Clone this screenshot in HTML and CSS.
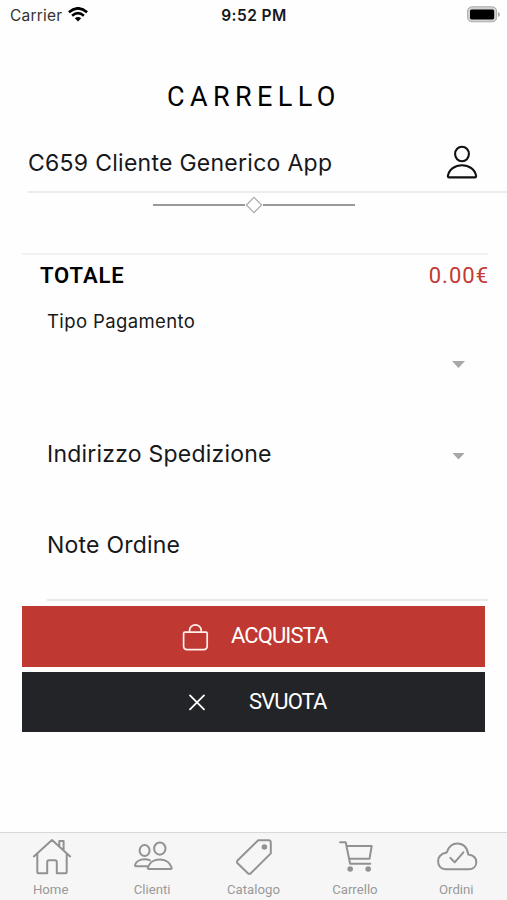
FILE: index.html
```html
<!DOCTYPE html>
<html lang="it">
<head>
<meta charset="utf-8">
<title>Carrello</title>
<link rel="stylesheet" href="styles.css">
</head>
<body>
<div class="screen">
  <header class="status">
    <div class="status-left"><span class="carrier">Carrier</span>
      <svg class="wifi" width="20" height="15" viewBox="0 0 20 15"><g fill="none" stroke="#000" stroke-width="2.6"><path d="M.9 5.2Q10-2.6 19.1 5.2"/><path d="M4.1 8.7Q10 3.5 15.9 8.7"/></g><path d="M6.8 11.3Q10 8.6 13.2 11.3L10 14.6Z"/></svg>
    </div>
    <span class="time">9:52 PM</span>
    <div class="status-right">
      <svg width="34" height="17" viewBox="0 0 34 17"><rect x="1.6" y=".8" width="29" height="15" rx="4.2" fill="#d2d2d2" stroke="#aaa" stroke-width="1"/><rect x="4" y="3.4" width="24.2" height="10" rx="1.6"/><path d="M32 6v5q2-.7 2-2.5T32 6Z" fill="#aaa"/></svg>
    </div>
  </header>
  <main>
    <h1 class="title">CARRELLO</h1>
    <section class="customer">
      <span class="customer-name">C659 Cliente Generico App</span>
      <svg width="32" height="36" viewBox="0 0 32 36" fill="none" stroke="#111" stroke-width="2.1"><ellipse cx="16" cy="10" rx="6.9" ry="7.3"/><path d="M3.2 33.4Q1.7 33.4 1.9 31.9C2.9 25.4 9 21.2 16 21.2S29.1 25.4 30.1 31.9Q30.3 33.4 28.8 33.4Z" stroke-linejoin="round"/></svg>
    </section>
    <div class="ornament"><span class="rule"></span><svg width="18" height="18" viewBox="0 0 18 18" fill="none" stroke="#aaa" stroke-width="1.2"><path d="M9 1.4 16.6 9 9 16.6 1.4 9Z"/></svg><span class="rule"></span></div>
    <section class="summary">
      <div class="total"><span class="total-label">TOTALE</span><span class="price">0.00€</span></div>
      <div class="field payment"><label class="payment-label">Tipo Pagamento</label><span class="caret"></span></div>
      <div class="field address"><label class="address-label">Indirizzo Spedizione</label><span class="caret"></span></div>
      <div class="notes"><label class="notes-label">Note Ordine</label></div>
    </section>
    <div class="actions">
      <button class="button buy"><svg width="28" height="28" viewBox="0 0 28 28" fill="none" stroke="#fff0ee" stroke-width="1.7" stroke-linejoin="round"><path d="M3 9.2H24Q25.2 9.2 25.2 10.4V23Q25.2 26.6 21.6 26.6H5.2Q1.6 26.6 1.6 23V10.4Q1.6 9.2 3 9.2M7.6 9V7.3C7.6 4.3 10.4 1.8 13.4 1.8S19.2 4.3 19.2 7.3V9"/></svg><span class="buy-label">ACQUISTA</span></button>
      <button class="button clear"><svg width="18" height="18" viewBox="0 0 18 18" stroke="#fff" stroke-width="1.8" stroke-linecap="round"><path d="M2 2.4 16 16.4M16 2.4 2 16.4"/></svg><span class="clear-label">SVUOTA</span></button>
    </div>
  </main>
  <nav class="tabs">
    <a class="tab"><svg width="42" height="38" viewBox="0 0 42 38"><path d="M2.8 18.4 21 2 39.2 18.4M6.3 15.5V33.7Q6.3 35.3 7.9 35.3H16.2V24Q16.2 22.2 18 22.2H24Q25.8 22.2 25.8 24V35.3H34.1Q35.7 35.3 35.7 33.7V15.5M28.3 8.5V3.1H32.6V12.2"/></svg><span class="tab-home">Home</span></a>
    <a class="tab"><svg width="42" height="38" viewBox="0 0 42 38"><ellipse cx="12.6" cy="12.5" rx="5" ry="5.4"/><ellipse cx="27.8" cy="10.6" rx="5.7" ry="6.1"/><path d="M15.3 28.2H4Q2.8 28.2 3.1 26.8C4 23.5 8 21.3 12.7 21.3Q15.6 21.3 18 22.3M17 31H38.2Q40 31 39.5 29.2C38 24.5 33.3 21.4 27.7 21.4S17.4 24.5 15.9 29.2Q15.4 31 17 31Z"/></svg><span class="tab-clients">Clienti</span></a>
    <a class="tab"><svg width="42" height="38" viewBox="0 0 42 38"><path d="M25.2 2.3H35.4Q37.8 2.3 37.8 4.7V15.4L18.2 34.9Q16.4 36.6 14.6 34.9L4.8 25.6Q3.1 24 4.8 22.2Z"/><circle class="filled" cx="31.4" cy="9" r="1.8"/></svg><span class="tab-catalog">Catalogo</span></a>
    <a class="tab"><svg width="42" height="38" viewBox="0 0 42 38"><path d="M5.1 4.2H10.7L15.1 25.8H35.3M11.5 8H36.7L34.5 20.8H14"/><circle class="filled" cx="15.2" cy="31" r="1.8"/><circle class="filled" cx="33.2" cy="31" r="1.8"/></svg><span class="tab-cart">Carrello</span></a>
    <a class="tab"><svg width="42" height="38" viewBox="0 0 42 38"><path d="M9.2 31.2C5.3 31.2 2.1 28.1 2.1 23.4C2.1 19.2 4.5 15.8 10.7 14.5C12.8 8.4 16.4 5.6 21.3 5.6C27.2 5.6 31.2 9.8 32.3 16.6C37.4 17.3 40.3 20 40.3 24.2C40.3 28.2 37.3 31.2 32.7 31.2ZM14.3 19.9 18.7 24.3 27.4 14.3"/></svg><span class="tab-orders">Ordini</span></a>
  </nav>
</div>
</body>
</html>
```
FILE: styles.css
```css
* { box-sizing: border-box; }
body { margin: 0; background: #fefefe; font-family: Inter, "Liberation Sans", sans-serif; color: #17181a; }
.screen { width: 507px; height: 900px; display: flex; flex-direction: column; overflow: hidden; }
svg { display: block; flex: none; }
span, label { white-space: nowrap; }
.status { height: 30px; flex: none; display: grid; grid-template-columns: 1fr auto 1fr; align-items: center; padding: 0 7px 0 10px; }
.status-left { display: flex; align-items: center; gap: 6px; font-size: 15.5px; letter-spacing: .2px; color: #333; }
.wifi { margin-bottom: 2px; }
.time { font-size: 15.5px; font-weight: 600; letter-spacing: .45px; margin-right: 2px; }
.status-right { display: flex; justify-content: flex-end; padding-bottom: 1px; }
main { flex: 1; }
.title { margin: 48px 0 0; height: 38px; line-height: 38px; padding-left: 167px; font-family: Roboto, sans-serif; font-size: 27px; font-weight: 400; letter-spacing: 5.4px; color: #000; }
.customer { margin-left: 28px; height: 77px; padding: 17px 29px 0 0; display: flex; align-items: center; justify-content: space-between; border-bottom: 2px solid #ececec; }
.customer-name { font-size: 23px; letter-spacing: .27px; padding-top: 2px; }
.ornament { height: 24px; display: flex; justify-content: center; align-items: center; }
.rule { width: 92px; height: 2px; background: #999; }
.summary { margin: 36px 19px 0 22px; border-top: 2px solid #f1f1f1; }
.total { height: 40px; padding-left: 18px; display: flex; justify-content: space-between; align-items: center; font-family: Roboto, sans-serif; font-size: 22px; }
.total-label { font-weight: 600; letter-spacing: .9px; color: #000; }
.price { letter-spacing: 1px; margin-right: -1px; color: #c33a35; }
.field { display: flex; justify-content: space-between; margin-left: 25px; padding-right: 23px; }
.payment { height: 114px; }
.payment-label { font-size: 18.5px; line-height: 52px; letter-spacing: .38px; }
.payment .caret { margin-top: 66px; }
.address { height: 92px; align-items: center; }
.address-label, .notes-label { font-size: 23px; letter-spacing: .22px; }
.address-label { margin-top: -2px; }
.address .caret { margin-top: 2px; }
.caret { width: 13px; height: 7px; background: #a8a8a8; clip-path: polygon(0 0, 100% 0, 50% 100%); }
.notes { height: 100px; margin-left: 25px; border-bottom: 2px solid #e8e8e8; }
.notes-label { display: block; line-height: 88px; }
.actions { margin: 5px 22px 0; display: grid; grid-template-rows: 61px 60px; gap: 5px; }
.button { border: 0; padding: 0; color: #fff; font: 400 22px/26px Roboto, sans-serif; display: flex; align-items: center; }
.button span { letter-spacing: -.9px; margin-top: -1px; }
.buy { background: #bf3832; padding-left: 160px; gap: 21px; }
.clear { background: #232428; padding-left: 166px; gap: 43px; }
.tabs { height: 68px; flex: none; background: #f6f6f6; border-top: 1px solid #d9d9d9; display: grid; grid-template-columns: repeat(5, 1fr); color: #999; }
.tab { display: flex; flex-direction: column; align-items: center; padding-top: 5px; font: 13.2px/16px Roboto, sans-serif; gap: 6px; }
.tab svg { fill: none; stroke: #929292; stroke-width: 2; stroke-linejoin: round; stroke-linecap: round; margin-left: 2px; }
.tab .filled { fill: #929292; }
```
